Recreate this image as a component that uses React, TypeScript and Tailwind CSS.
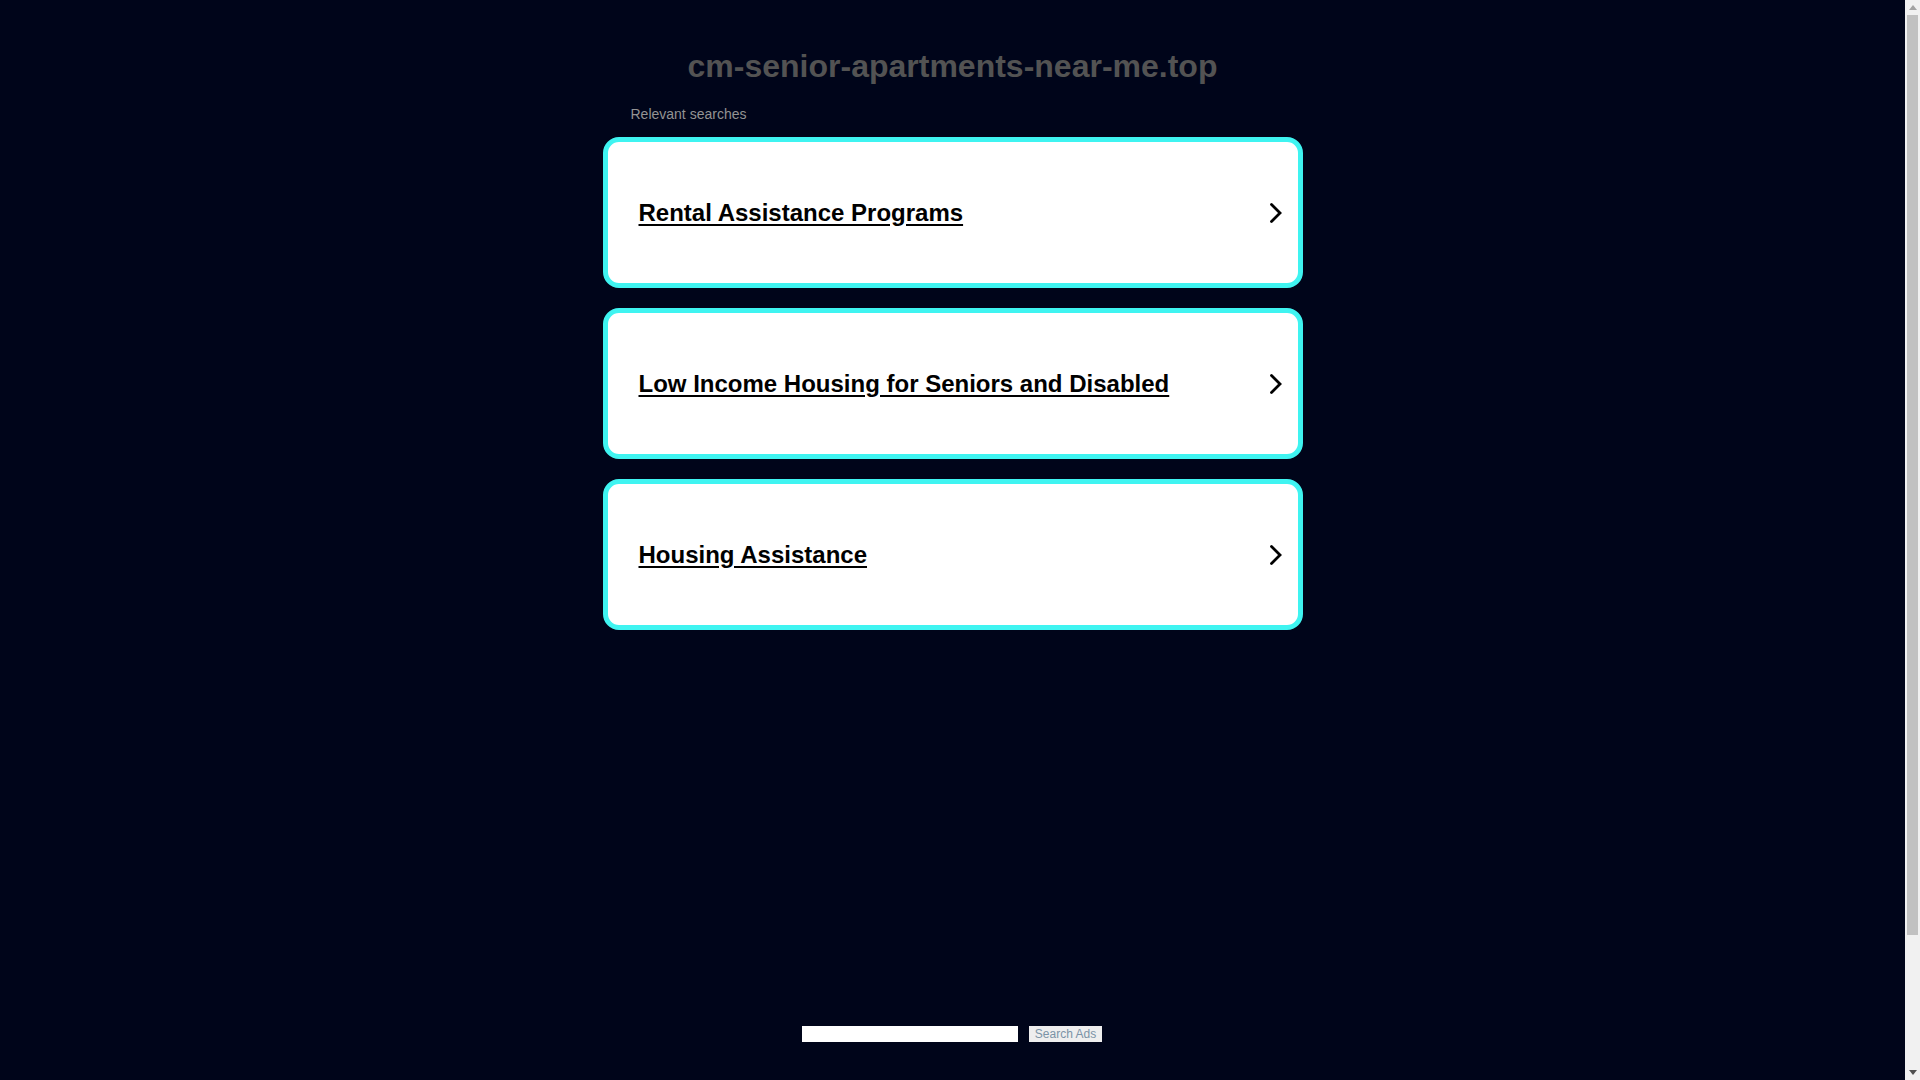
const searches = ['Rental Assistance Programs', 'Low Income Housing for Seniors and Disabled', 'Housing Assistance'];

const Chevron = () => (
    <svg width="14" height="22" viewBox="0 0 14 22" fill="none" stroke="#000" strokeWidth="2.8" strokeLinecap="round" strokeLinejoin="miter">
        <polyline points="2.5,2.5 11,11 2.5,19.5" />
    </svg>
);

// window scrollbar as it shows in the screenshot
const Scrollbar = () => (
    <div className="flex w-[15px] shrink-0 flex-col bg-[#f1f1f1]">
        <div className="flex h-[15px] items-center justify-center">
            <svg width="8" height="5" viewBox="0 0 8 5"><polygon points="4,0 8,5 0,5" fill="#a3a3a3" /></svg>
        </div>
        <div className="mx-[2px] h-[920px] bg-[#c1c1c1]" />
        <div className="flex-1" />
        <div className="flex h-[15px] items-center justify-center">
            <svg width="8" height="5" viewBox="0 0 8 5"><polygon points="0,0 8,0 4,5" fill="#505050" /></svg>
        </div>
    </div>
);

export default function App() {
    return (
        <div className="flex h-screen overflow-hidden bg-[#00051a] font-['Liberation_Sans',Arial,sans-serif]">
            <div className="flex-1">
                <div className="mx-auto w-[700px]">
                    {/* Header */}
                    <h1 className="pt-[48px] text-center text-[32px] leading-[36px] font-bold text-[#535353]">
                        cm-senior-apartments-near-me.top
                    </h1>
                    <p className="mt-[22px] pl-[28px] text-[14px] leading-[16px] text-[#939393]">Relevant searches</p>

                    {/* Search cards */}
                    <div className="mt-[15px] flex flex-col gap-[20px]">
                        {searches.map((s) => (
                            <a
                                key={s}
                                href="#"
                                className="flex h-[151px] items-center justify-between rounded-[16px] border-[5px] border-[#3ff4f1] bg-white pl-[31px] pr-[15px]"
                            >
                                <span className="text-[24px] leading-[28px] font-bold text-black underline underline-offset-[3px]">{s}</span>
                                <Chevron />
                            </a>
                        ))}
                    </div>
                </div>

                {/* Search box */}
                <div className="mt-[396px] flex justify-center gap-[11px] pr-[1px]">
                    <input type="text" className="h-[16px] w-[216px] border-0 bg-white outline-none" />
                    <button className="h-[16px] w-[73px] bg-[#eeeeee] text-[12px] leading-[16px] text-[#7b93a6]">Search Ads</button>
                </div>
            </div>
            <Scrollbar />
        </div>
    );
}
